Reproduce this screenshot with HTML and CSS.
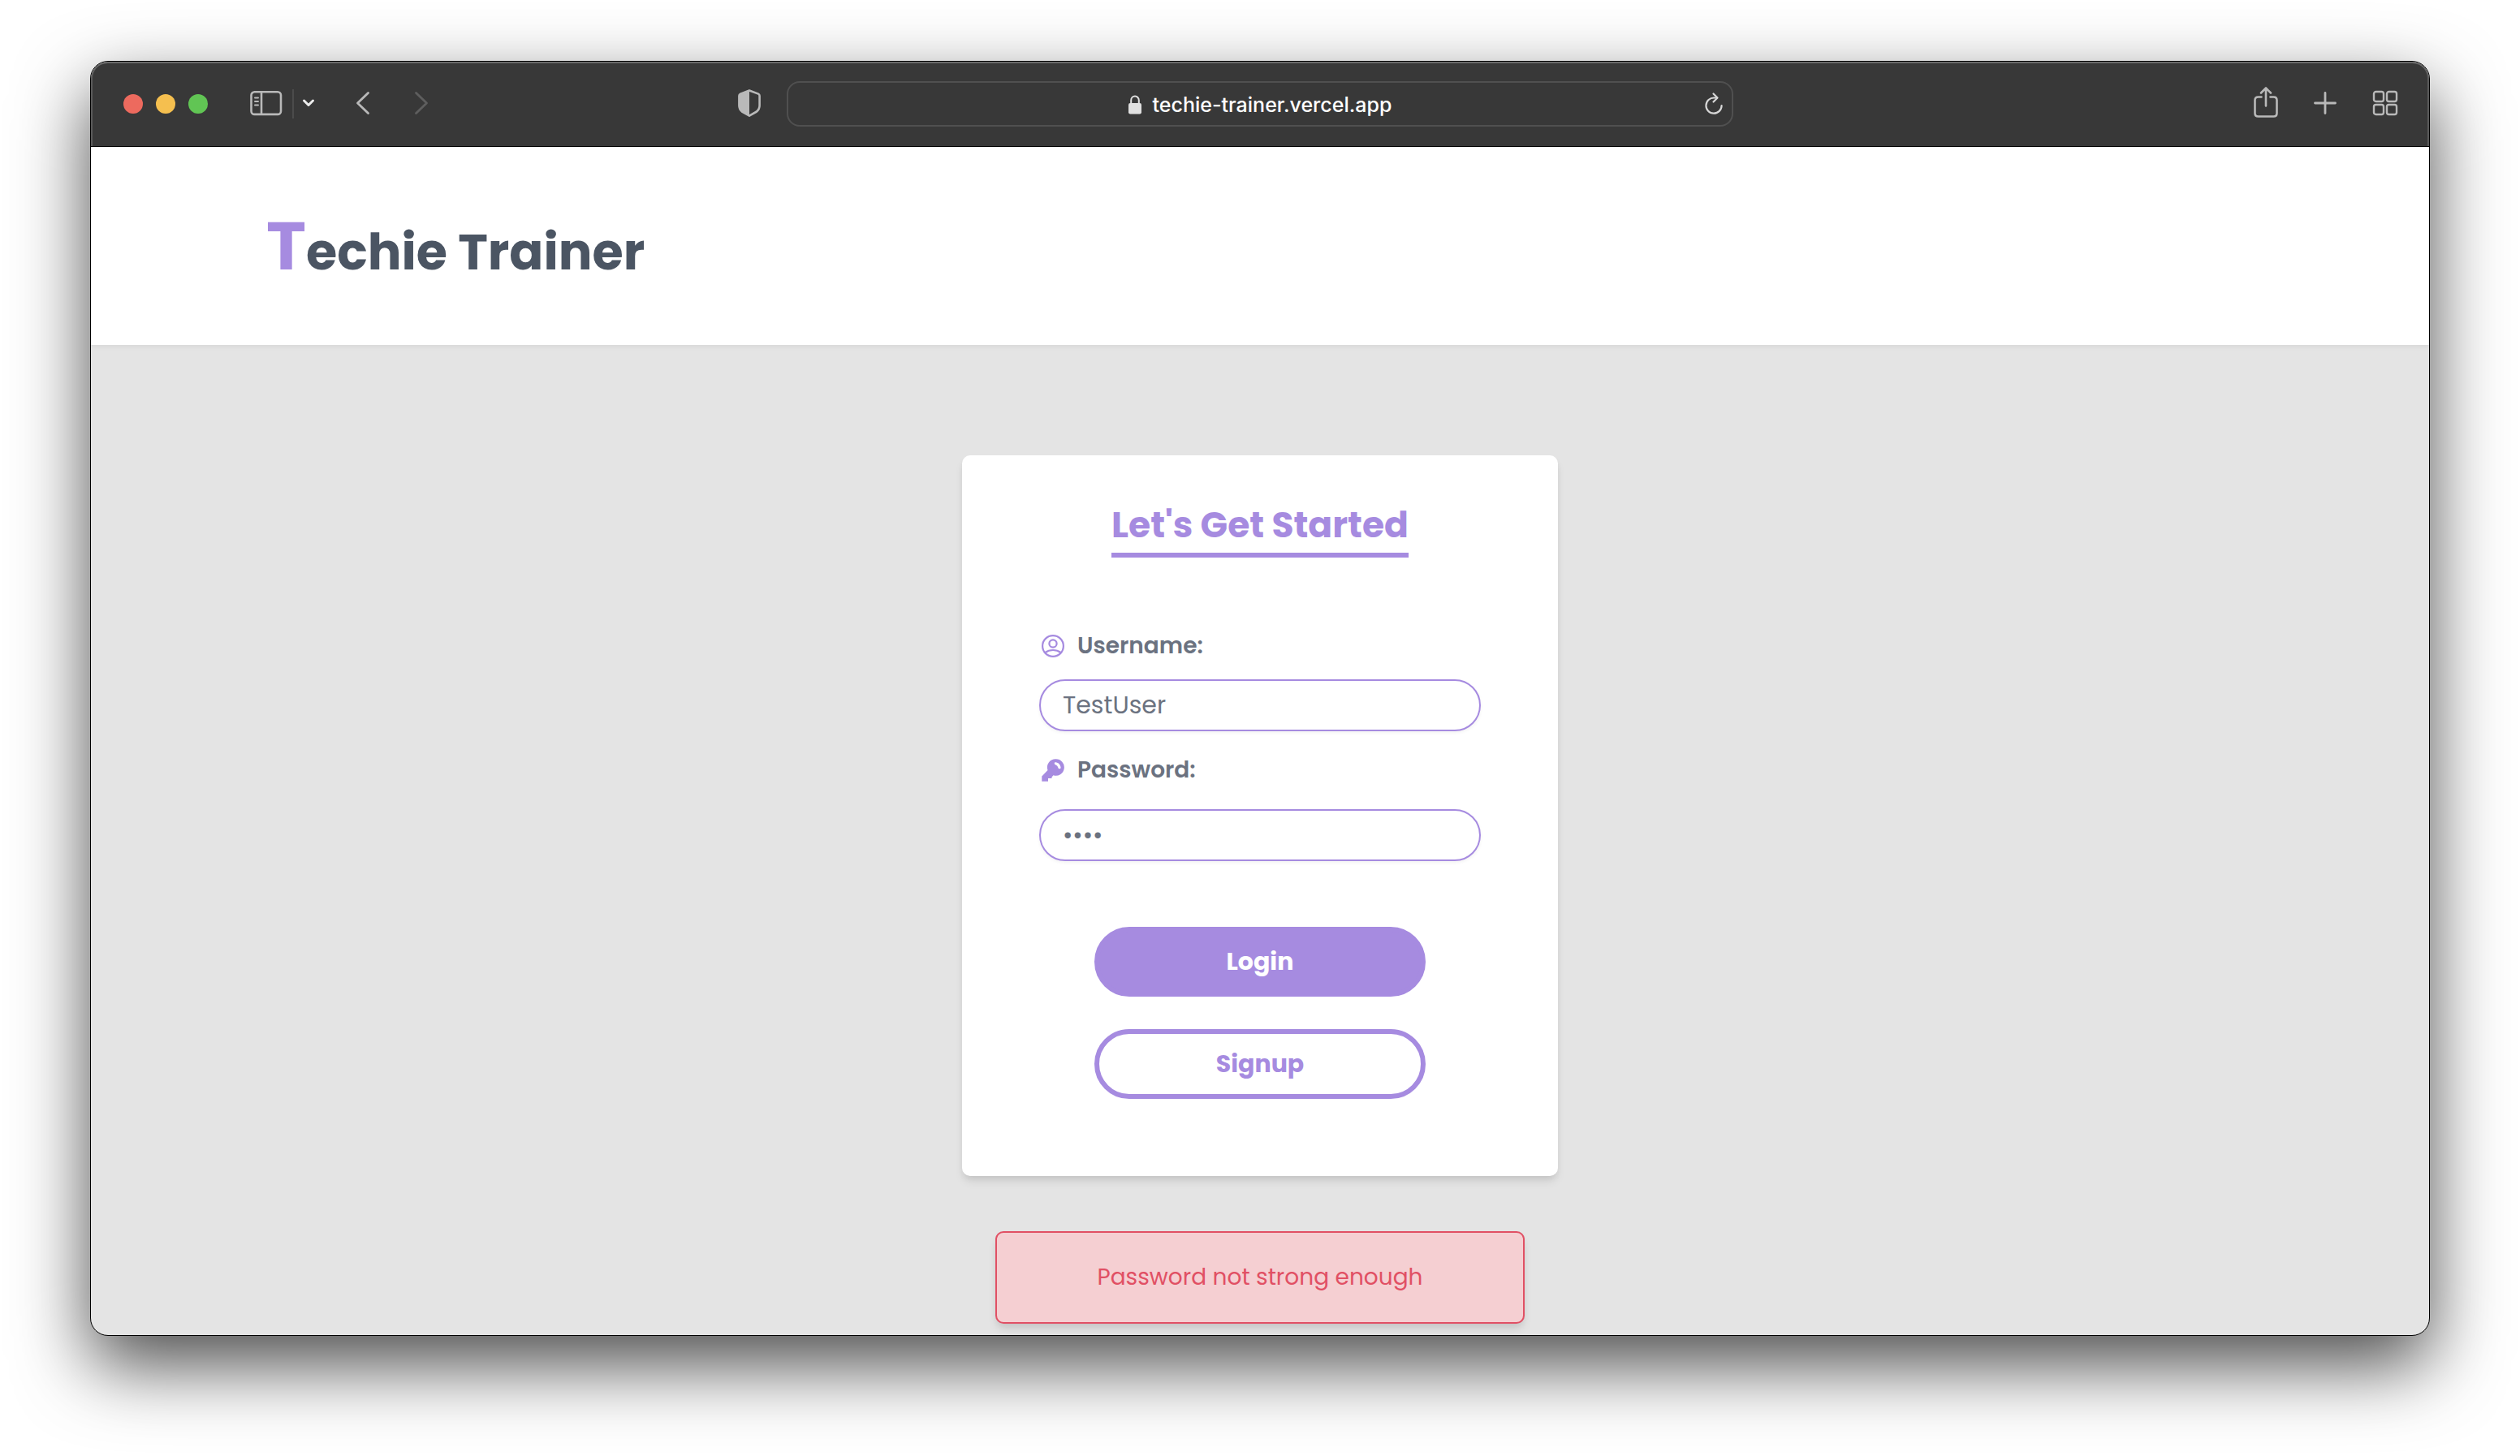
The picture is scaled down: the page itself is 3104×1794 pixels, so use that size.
FILE: index.html
```html
<!DOCTYPE html>
<html lang="en">
<head>
<meta charset="utf-8">
<meta name="viewport" content="width=device-width, initial-scale=1">
<title>Techie Trainer</title>
<link rel="stylesheet" href="styles.css">
</head>
<body>
<div class="window">
  <div class="toolbar">
    <div class="toolbar-left">
      <div class="lights">
        <span class="light light-red"></span>
        <span class="light light-yellow"></span>
        <span class="light light-green"></span>
      </div>
      <button class="tool sidebar-btn" type="button" aria-label="Sidebar">
        <svg width="40" height="32" viewBox="0 0 40 32" fill="none" stroke="#b9b9b9" stroke-width="2.6" stroke-linecap="round"><rect x="1.5" y="2.3" width="36.5" height="27.6" rx="4"/><path d="M14 2.5v27"/><path d="M6 9.4h4M6 13.9h4M6 18.400h4" stroke-width="2"/></svg>
      </button>
      <span class="divider"></span>
      <button class="tool menu-btn" type="button" aria-label="Tab groups">
        <svg width="16" height="12" viewBox="0 0 16 12" fill="none" stroke="#ececec" stroke-width="3" stroke-linecap="round" stroke-linejoin="round"><path d="M2.500 3l5.500 5.500L13.500 3"/></svg>
      </button>
      <button class="tool back-btn" type="button" aria-label="Back">
        <svg width="18" height="30" viewBox="0 0 18 30" fill="none" stroke="#b9b9b9" stroke-width="2.800" stroke-linecap="round" stroke-linejoin="round"><path d="M15.500 2.500L2.500 15l13 12.500"/></svg>
      </button>
      <button class="tool forward-btn" type="button" aria-label="Forward">
        <svg width="18" height="30" viewBox="0 0 18 30" fill="none" stroke="#5e5e5e" stroke-width="2.800" stroke-linecap="round" stroke-linejoin="round"><path d="M2.500 2.500l13 12.500-13 12.500"/></svg>
      </button>
      <button class="tool shield-btn" type="button" aria-label="Privacy report">
        <svg width="28" height="34" viewBox="0 0 28 34"><path d="M14 1.500L25 5.600q1.600.7 1.600 2.400V20q0 4.500-3.600 7.500L14 32.600 5 27.500Q1.400 24.500 1.400 20V8q0-1.700 1.600-2.400z" fill="none" stroke="#b9b9b9" stroke-width="2.600" stroke-linejoin="round"/><path d="M14 1.500L3 5.600Q1.400 6.300 1.400 8v12q0 4.500 3.600 7.500l9 5.100z" fill="#b9b9b9"/></svg>
      </button>
    </div>
    <div class="address">
      <span class="address-text">
        <svg width="16" height="24" viewBox="0 0 16 24"><rect x="0" y="10" width="16" height="13.500" rx="2.200" fill="#e0e0e0"/><path d="M3.200 11V6.500a4.800 5 0 0 1 9.600 0V11" fill="none" stroke="#e0e0e0" stroke-width="2"/></svg>
        <span>techie-trainer.vercel.app</span>
      </span>
      <button class="tool reload-btn" type="button" aria-label="Reload">
        <svg width="24" height="28" viewBox="0 0 24 28" fill="none" stroke="#d6d6d6" stroke-width="2.200" stroke-linecap="round" stroke-linejoin="round"><path d="M16 7.500H12.500A9.600 9.600 0 1 0 21.600 17"/><path d="M11.500 2.500l5 5-5 5"/></svg>
      </button>
    </div>
    <div class="toolbar-right">
      <button class="tool" type="button" aria-label="Share">
        <svg width="30" height="42" viewBox="0 0 30 42" fill="none" stroke="#b9b9b9" stroke-width="2.600" stroke-linecap="round" stroke-linejoin="round"><path d="M9.500 13.500H5.500Q1.500 13.500 1.500 17.500v16q0 4 4 4h19q4 0 4-4v-16q0-4-4-4h-4"/><path d="M15 24.500V3M9 8.500L15 2.500l6 6"/></svg>
      </button>
      <button class="tool" type="button" aria-label="New tab">
        <svg width="28" height="28" viewBox="0 0 28 28" fill="none" stroke="#b9b9b9" stroke-width="2.800" stroke-linecap="round"><path d="M14 1.500v25M1.500 14h25"/></svg>
      </button>
      <button class="tool" type="button" aria-label="Tab overview">
        <svg width="32" height="32" viewBox="0 0 32 32" fill="none" stroke="#b9b9b9" stroke-width="2.400"><rect x="2" y="2" width="12" height="12" rx="2.500"/><rect x="18" y="2" width="12" height="12" rx="2.500"/><rect x="2" y="18" width="12" height="12" rx="2.500"/><rect x="18" y="18" width="12" height="12" rx="2.500"/></svg>
      </button>
    </div>
  </div>

  <header class="site-header">
    <h1 class="logo"><span class="logo-initial">T</span>echie Trainer</h1>
  </header>

  <main class="page">
    <form class="card">
      <h2 class="card-title">Let's Get Started</h2>
      <div class="field field-user">
        <label class="label" for="username">
          <svg class="label-icon" viewBox="0 0 28 28" fill="none" stroke="currentColor" stroke-width="2.200"><circle cx="14" cy="14" r="12.900"/><circle cx="14" cy="11" r="4.600"/><path d="M4.500 22q4-3 9.500-3t9.500 3"/></svg>
          Username:
        </label>
        <input class="input" id="username" type="text" value="TestUser">
      </div>
      <div class="field field-password">
        <label class="label" for="password">
          <svg class="label-icon" viewBox="0 0 28 28"><path fill="currentColor" fill-rule="evenodd" d="M17.500.3a10.200 10.200 0 1 1-3 19.900L12.500 22.500v1.500H8v3.700H.3v-6.200L7.500 14A10.200 10.200 0 0 1 17.500.3zM16.500 4.200c-1 .5-1 2.500.5 3 2 .8 3 2 3.500 4 .4 1.500 2.500 1.300 3 .3.500-3-2.500-7.700-7-7.300z"/></svg>
          Password:
        </label>
        <input class="input" id="password" type="password" value="test">
      </div>
      <div class="actions">
        <button class="btn btn-primary" type="submit">Login</button>
        <button class="btn btn-outline" type="button">Signup</button>
      </div>
    </form>
    <p class="alert" role="alert">Password not strong enough</p>
  </main>
</div>
</body>
</html>
```
FILE: styles.css
```css
:root {
  --purple: #a68be0;
  --slate: #4b5563;
  --gray: #6b7280;
  --red: #e15064;
}

* {
  box-sizing: border-box;
}

body {
  margin: 0;
  padding: 75px 111px 147px;
  background: #fff;
  font-family: Poppins, Inter, sans-serif;
}

h1,
h2,
p {
  margin: 0;
}

svg {
  display: block;
}

/* Browser window */

.window {
  overflow: hidden;
  border: 1px solid #000;
  border-radius: 22px;
  background: #e4e4e4;
  box-shadow: 0 36px 90px rgba(0, 0, 0, 0.7);
}

.toolbar {
  display: grid;
  grid-template-columns: 1fr 1166px 1fr;
  align-items: center;
  height: 105px;
  border-bottom: 1px solid #000;
  background: #383838;
  box-shadow: inset 0 2px 0 #6a6a6a, inset 2px 0 0 #5a5a5a, inset -2px 0 0 #5a5a5a;
  border-radius: 21px 21px 0 0;
}

.toolbar-left,
.toolbar-right,
.lights {
  display: flex;
  align-items: center;
}

.toolbar-left {
  padding: 0 32px 0 40px;
}

.toolbar-right {
  justify-content: flex-end;
  gap: 44px;
  padding-right: 38px;
}

.tool {
  padding: 0 0 2px;
  border: 0;
  background: none;
}

.lights {
  gap: 16px;
}

.light {
  width: 24px;
  height: 24px;
  border-radius: 50%;
}

.light-red {
  background: #ed6a5e;
}

.light-yellow {
  background: #f5bf4f;
}

.light-green {
  background: #61c554;
}

.sidebar-btn {
  margin-left: 52px;
}

.divider {
  width: 2px;
  height: 36px;
  margin-left: 12px;
  background: #4b4b4b;
}

.menu-btn {
  margin-left: 10px;
}

.back-btn {
  margin-left: 50px;
}

.forward-btn {
  margin-left: 54px;
}

.shield-btn {
  margin-left: auto;
}

.address {
  display: grid;
  grid-template-columns: 1fr auto 1fr;
  align-items: center;
  height: 56px;
  padding: 0 10px;
  border: 2px solid #505050;
  border-radius: 16px;
}

.address-text {
  grid-column: 2;
  display: flex;
  align-items: center;
  gap: 14px;
  padding-top: 2px;
  color: #fff;
  font-family: Inter, sans-serif;
  font-size: 25px;
  font-weight: 500;
  line-height: 32px;
}

.reload-btn {
  justify-self: end;
}

/* Page */

.site-header {
  display: flex;
  align-items: center;
  height: 244px;
  padding: 8px 7.5% 0;
  background: #fff;
  box-shadow: 0 2px 6px rgba(0, 0, 0, 0.06);
}

.logo {
  color: var(--slate);
  font-size: 62px;
  font-weight: 700;
  line-height: 120px;
}

.logo-initial {
  color: var(--purple);
  font-size: 83px;
}

.page {
  display: flex;
  flex-direction: column;
  align-items: center;
  gap: 68px;
  padding: 136px 0 14px;
}

.card {
  display: flex;
  flex-direction: column;
  width: 734px;
  max-width: 100%;
  padding: 56px 95px 95px;
  border-radius: 10px;
  background: #fff;
  box-shadow: 0 8px 12px -2px rgba(0, 0, 0, 0.1), 0 4px 8px -2px rgba(0, 0, 0, 0.06);
}

.card-title {
  align-self: center;
  padding-bottom: 4px;
  border-bottom: 6px solid var(--purple);
  color: var(--purple);
  font-size: 44px;
  font-weight: 700;
  line-height: 60px;
}

.field {
  display: flex;
  flex-direction: column;
}

.field-user {
  gap: 21px;
  margin-top: 89px;
}

.field-password {
  gap: 28px;
  margin-top: 28px;
}

.label {
  display: flex;
  align-items: center;
  gap: 16px;
  padding-left: 3px;
  color: var(--gray);
  font-size: 28px;
  font-weight: 600;
  line-height: 40px;
}

.label-icon {
  width: 28px;
  height: 28px;
  color: var(--purple);
}

.input {
  width: 100%;
  height: 64px;
  padding: 0 27px;
  border: 2px solid var(--purple);
  border-radius: 32px;
  background: #fff;
  box-shadow: 0 2px 4px rgba(0, 0, 0, 0.05);
  color: var(--gray);
  font-family: inherit;
  font-size: 30px;
}

.actions {
  display: flex;
  flex-direction: column;
  gap: 40px;
  margin: 81px 68px 0;
}

.btn {
  height: 86px;
  border: 6px solid var(--purple);
  border-radius: 43px;
  font-family: inherit;
  font-size: 30px;
  font-weight: 700;
}

.btn-primary {
  background: var(--purple);
  color: #fff;
}

.btn-outline {
  background: #fff;
  color: var(--purple);
}

.alert {
  width: 652px;
  max-width: 100%;
  padding: 35px 24px;
  border: 2px solid var(--red);
  border-radius: 10px;
  background: #f5cfd2;
  box-shadow: 0 8px 12px -2px rgba(0, 0, 0, 0.1), 0 4px 8px -2px rgba(0, 0, 0, 0.06);
  color: var(--red);
  font-size: 28px;
  line-height: 40px;
  text-align: center;
}
```
